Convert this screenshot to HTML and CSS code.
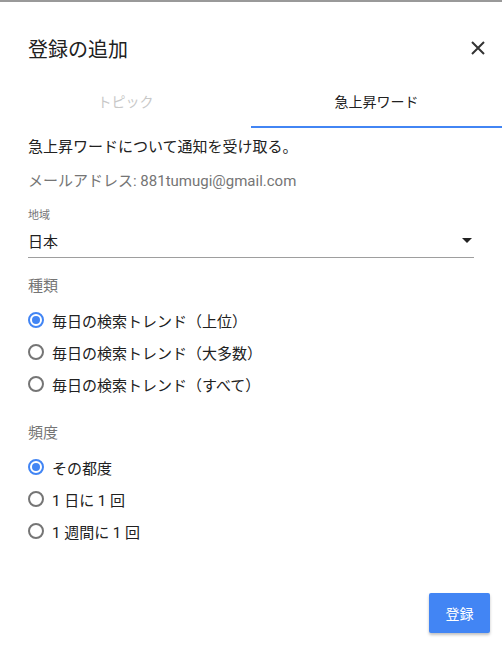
FILE: index.html
```html
<!DOCTYPE html>
<html lang="ja">
<head>
<meta charset="utf-8">
<link rel="stylesheet" href="styles.css">
</head>
<body>
<div class="dialog">
  <div class="header">
    <h1 class="title">登録の追加</h1>
    <svg class="close" width="14" height="14" viewBox="0 0 14 14"><path d="M1 1L13 13M13 1L1 13" stroke="#333" stroke-width="2" fill="none"/></svg>
  </div>
  <div class="tabs">
    <div class="tab">トピック</div>
    <div class="tab active">急上昇ワード</div>
  </div>
  <div class="body">
    <p class="lead">急上昇ワードについて通知を受け取る。</p>
    <p class="email">メールアドレス: 881tumugi@gmail.com</p>
    <div class="field">
      <div class="field-label">地域</div>
      <div class="select">
        <span>日本</span>
        <svg class="arrow" width="10" height="5" viewBox="0 0 10 5"><path d="M0 0H10L5 5Z" fill="#222"/></svg>
      </div>
    </div>
    <div class="group">
      <div class="group-label">種類</div>
      <div class="radio checked"><span class="dot"></span>毎日の検索トレンド（上位）</div>
      <div class="radio"><span class="dot"></span>毎日の検索トレンド（大多数）</div>
      <div class="radio"><span class="dot"></span>毎日の検索トレンド（すべて）</div>
    </div>
    <div class="group">
      <div class="group-label">頻度</div>
      <div class="radio checked"><span class="dot"></span>その都度</div>
      <div class="radio"><span class="dot"></span>1 日に 1 回</div>
      <div class="radio"><span class="dot"></span>1 週間に 1 回</div>
    </div>
  </div>
  <div class="footer">
    <button class="submit">登録</button>
  </div>
</div>
</body>
</html>
```
FILE: styles.css
```css
html, body {
  margin: 0;
  padding: 0;
  background: #fff;
}
body {
  border-top: 2px solid #999;
  font-family: Roboto, "Noto Sans CJK JP", sans-serif;
  color: #212121;
  height: 646px;
  overflow: hidden;
}
.dialog {
  display: flex;
  flex-direction: column;
}
.header {
  display: flex;
  align-items: center;
  justify-content: space-between;
  height: 36px;
  padding: 28px 17px 0 28px;
}
.title {
  margin: 0;
  font-size: 20px;
  font-weight: 400;
  color: #212121;
}
.close {
  display: block;
}
.tabs {
  display: flex;
  margin-top: 14px;
}
.tab {
  flex: 1;
  text-align: center;
  font-size: 14px;
  color: #c8c8c8;
  height: 48px;
  line-height: 44px;
  box-sizing: border-box;
}
.tab.active {
  color: #212121;
  border-bottom: 2px solid #4285f4;
}
.body {
  padding: 0 28px;
}
.lead {
  margin: 8px 0 0;
  font-size: 15px;
  line-height: 22px;
}
.email {
  margin: 12px 0 0;
  font-size: 15px;
  line-height: 22px;
  color: #757575;
}
.field {
  margin-top: 17px;
}
.field-label {
  font-size: 11px;
  line-height: 14px;
  color: #757575;
}
.select {
  display: flex;
  align-items: center;
  justify-content: space-between;
  height: 34px;
  border-bottom: 1px solid #9e9e9e;
  font-size: 15px;
  padding-right: 2px;
}
.group {
  margin-top: 17px;
}
.group + .group {
  margin-top: 22px;
}
.group-label {
  font-size: 15px;
  line-height: 22px;
  color: #757575;
}
.radio {
  display: flex;
  align-items: center;
  gap: 8px;
  height: 32px;
  font-size: 15px;
}
.group-label + .radio {
  margin-top: 7px;
}
.dot {
  width: 16px;
  height: 16px;
  box-sizing: border-box;
  border-radius: 50%;
  border: 2px solid #757575;
  position: relative;
  flex: none;
}
.radio.checked .dot {
  border-color: #4285f4;
}
.radio.checked .dot::after {
  content: "";
  position: absolute;
  left: 2px;
  top: 2px;
  width: 8px;
  height: 8px;
  border-radius: 50%;
  background: #4285f4;
}
.footer {
  display: flex;
  justify-content: flex-end;
  padding: 46px 12px 0 0;
}
.submit {
  width: 61px;
  height: 40px;
  border: none;
  border-radius: 2px;
  background: #4285f4;
  color: #fff;
  font-family: Roboto, "Noto Sans CJK JP", sans-serif;
  font-size: 14px;
  box-shadow: 0 2px 3px rgba(0,0,0,0.25);
}
```
